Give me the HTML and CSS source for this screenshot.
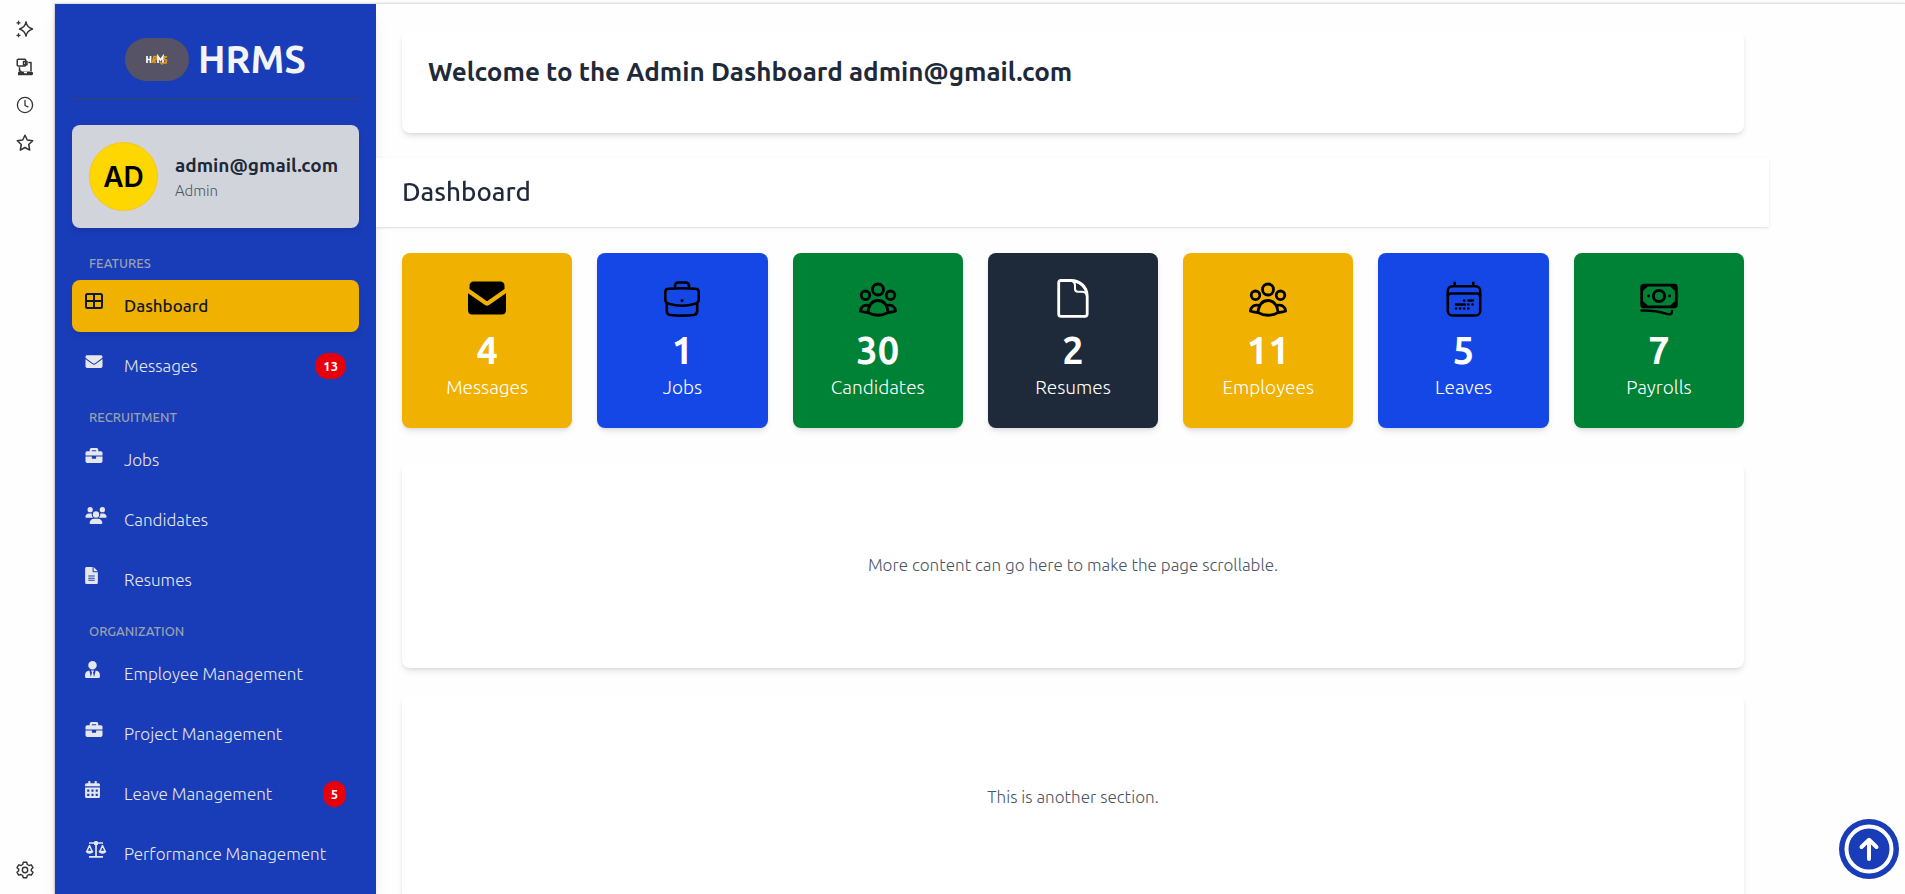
FILE: index.html
```html
<!DOCTYPE html>
<html lang="en">
<head>
<meta charset="utf-8">
<title>HRMS Admin Dashboard</title>
<link rel="stylesheet" href="styles.css">
</head>
<body>
<div class="shell">
  <aside class="rail" aria-label="Quick tools">
    <button class="rail-button" aria-label="Assistant">
      <svg viewBox="0 0 18 18" fill="none" stroke="currentColor" stroke-width="1.4" stroke-linejoin="round"><path d="M10 1.8C10.7 5.800 12.200 7.600 16.500 9 12.200 10.400 10.700 12.200 10 16.200 9.300 12.200 7.800 10.400 3.500 9 7.800 7.600 9.300 5.800 10 1.800Z"/><path d="M2.500.800v4M.500 2.800h4M2.500 13.300v4M.500 15.300h4" stroke-width="1.300"/></svg>
    </button>
    <button class="rail-button" aria-label="Devices">
      <svg viewBox="0 0 18 18" fill="none" stroke="currentColor" stroke-width="1.500" stroke-linejoin="round"><rect x="1.200" y="1.200" width="8.500" height="6.800" rx="1"/><path d="M7.500 3.500H11v3.200H7.500zM12.300 4.500H15V13M3.500 9.200v4.300"/><path d="M3.500 11.500 6 13.500h10v3.700H2V14.500h1.500z" fill="currentColor" stroke="none"/><path d="M2.500 14.500h14v2h-14z" stroke-width="1"/><path d="M8 14.500h3" stroke="#fff"/></svg>
    </button>
    <button class="rail-button" aria-label="History">
      <svg viewBox="0 0 18 18" fill="none" stroke="currentColor" stroke-width="1.300" stroke-linecap="round" stroke-linejoin="round"><circle cx="9" cy="9" r="7.600"/><path d="M9 4.500v5l3 1.300"/></svg>
    </button>
    <button class="rail-button" aria-label="Favourites">
      <svg viewBox="0 0 18 18" fill="none" stroke="currentColor" stroke-width="1.500" stroke-linejoin="round"><path d="M9 1.200 11.300 6l5.400.700-4 3.800 1 5.600L9 13.500l-4.700 2.600 1-5.600-4-3.800L6.700 6z"/></svg>
    </button>
    <button class="rail-button rail-bottom" aria-label="Settings">
      <svg viewBox="0 0 18 18" fill="none" stroke="currentColor" stroke-width="1.400" stroke-linejoin="round"><path d="M7.300 1.200h3.400l.6 2.300 1.700 1 2.300-.700 1.700 2.900L15.300 8.300v1.400l1.700 1.600-1.700 2.900-2.300-.700-1.700 1-.6 2.300H7.300l-.6-2.300-1.700-1-2.300.700L1 11.300l1.700-1.600V8.300L1 6.700l1.700-2.900 2.300.700 1.700-1z"/><circle cx="9" cy="9" r="2.700"/></svg>
    </button>
  </aside>

  <div class="frame">
    <nav class="sidebar" aria-label="Main">
      <header class="brand">
        <svg class="brand-logo" viewBox="0 0 64 43" role="img" aria-label="HRMS logo">
          <rect width="64" height="43" rx="21.500" fill="#565366"/>
          <g fill="none" stroke-width="1.700"><path d="M22 18v7M25.500 18v7M22 21.500h3.500" stroke="#fff"/><path d="M27.500 25l1.500-6.500h2.500l-.5 3h-2.500l2 3.500" stroke="#e09a1c"/><path d="M33 25v-6.500l2.500 3.500L38 18.500V25" stroke="#fff"/><path d="M42 18.800h-2.500l-.5 2.500 2.500 1-.5 2.500h-3M35 24l2.500 2.500" stroke="#e09a1c"/></g>
        </svg>
        <span class="brand-name">HRMS</span>
      </header>

      <section class="profile">
        <span class="avatar">AD</span>
        <div>
          <p class="profile-name">admin@gmail.com</p>
          <p class="profile-role">Admin</p>
        </div>
      </section>

      <h2 class="nav-title">Features</h2>
      <ul class="nav-list">
        <li><a class="nav-item nav-active" href="#dashboard"><span class="nav-icon"><svg viewBox="0 0 18 17" width="18" height="17" fill="none" stroke="currentColor" stroke-width="2"><rect x="1" y="1" width="16" height="14" rx="1.500"/><path d="M9 1v14M1 8h16"/></svg></span>Dashboard</a></li>
        <li><a class="nav-item" href="#messages"><span class="nav-icon"><svg viewBox="0 0 512 512" width="18" height="17" fill="currentColor"><path d="M502.300 190.800c3.900-3.100 9.700-.2 9.700 4.700V400c0 26.500-21.500 48-48 48H48c-26.500 0-48-21.500-48-48V195.600c0-5 5.700-7.800 9.700-4.700 22.400 17.400 52.100 39.500 154.100 113.600 21.100 15.400 56.700 47.800 92.200 47.600 35.700.3 72-32.800 92.300-47.600 102-74.100 131.600-96.300 154-113.700zM256 320c23.200.4 56.600-29.200 73.400-41.400 132.700-96.300 142.800-104.700 173.400-128.700 5.800-4.500 9.200-11.500 9.200-18.900v-19c0-26.500-21.500-48-48-48H48c-26.500 0-48 21.500-48 48v19c0 7.400 3.400 14.300 9.200 18.900 30.600 23.900 40.700 32.400 173.400 128.700 16.800 12.200 50.200 41.800 73.400 41.400z"/></svg></span>Messages<span class="badge">13</span></a></li>
      </ul>

      <h2 class="nav-title">Recruitment</h2>
      <ul class="nav-list">
        <li><a class="nav-item" href="#jobs"><span class="nav-icon"><svg viewBox="0 0 512 512" width="18" height="17" fill="currentColor"><path d="M320 336c0 8.840-7.160 16-16 16h-96c-8.840 0-16-7.160-16-16v-48H0v144c0 25.600 22.400 48 48 48h416c25.600 0 48-22.400 48-48V288H320v48zm144-208h-80V80c0-25.600-22.400-48-48-48H176c-25.600 0-48 22.400-48 48v48H48c-25.600 0-48 22.400-48 48v80h512v-80c0-25.600-22.400-48-48-48zm-144 0H192V96h128v32z"/></svg></span>Jobs</a></li>
        <li><a class="nav-item" href="#candidates"><span class="nav-icon"><svg viewBox="0 0 640 512" width="22" height="17" fill="currentColor"><path d="M144 0a80 80 0 1 1 0 160A80 80 0 1 1 144 0zM512 0a80 80 0 1 1 0 160A80 80 0 1 1 512 0zM0 298.700C0 239.800 47.800 192 106.700 192l42.700 0c15.900 0 31 3.500 44.600 9.700c-1.300 7.200-1.900 14.700-1.900 22.300c0 38.200 16.800 72.500 43.300 96L21.300 320C9.600 320 0 310.400 0 298.700zM405.300 320c26.600-23.500 43.300-57.800 43.300-96c0-7.600-.7-15-1.900-22.300c13.600-6.300 28.700-9.700 44.600-9.700l42.700 0C592.200 192 640 239.800 640 298.700c0 11.800-9.600 21.300-21.300 21.300zM224 224a96 96 0 1 1 192 0 96 96 0 1 1 -192 0zM128 485.300C128 411.700 187.700 352 261.300 352l117.300 0C452.300 352 512 411.700 512 485.300c0 14.700-11.900 26.700-26.700 26.700l-330.700 0c-14.700 0-26.700-11.900-26.700-26.700z"/></svg></span>Candidates</a></li>
        <li><a class="nav-item" href="#resumes"><span class="nav-icon"><svg viewBox="0 0 384 512" width="13" height="17" fill="currentColor"><path fill-rule="evenodd" d="M224 136V0H48C20 0 0 20 0 48v416c0 28 20 48 48 48h288c28 0 48-20 48-48V160H248c-13.200 0-24-10.800-24-24zM96 384h192v32H96zM96 320h192v32H96zM96 256h192v32H96zM384 128H256V0z"/></svg></span>Resumes</a></li>
      </ul>

      <h2 class="nav-title">Organization</h2>
      <ul class="nav-list">
        <li><a class="nav-item" href="#employees"><span class="nav-icon"><svg viewBox="0 0 448 512" width="15" height="17" fill="currentColor"><path d="M224 256c70.700 0 128-57.300 128-128S294.700 0 224 0 96 57.300 96 128s57.300 128 128 128zm95.800 32.600L272 480l-32-136 32-56h-96l32 56-32 136-47.800-191.400C56.900 292 0 350.300 0 422.400V464c0 26.500 21.500 48 48 48h352c26.500 0 48-21.500 48-48v-41.600c0-72.100-56.900-130.400-128.200-133.800z"/></svg></span>Employee Management</a></li>
        <li><a class="nav-item" href="#projects"><span class="nav-icon"><svg viewBox="0 0 512 512" width="18" height="17" fill="currentColor"><path d="M320 336c0 8.840-7.160 16-16 16h-96c-8.840 0-16-7.160-16-16v-48H0v144c0 25.600 22.400 48 48 48h416c25.600 0 48-22.400 48-48V288H320v48zm144-208h-80V80c0-25.600-22.400-48-48-48H176c-25.600 0-48 22.400-48 48v48H48c-25.600 0-48 22.400-48 48v80h512v-80c0-25.600-22.400-48-48-48zm-144 0H192V96h128v32z"/></svg></span>Project Management</a></li>
        <li><a class="nav-item" href="#leaves"><span class="nav-icon"><svg viewBox="0 0 448 512" width="15" height="17" fill="currentColor" fill-rule="evenodd"><path d="M400 64h-48V16c0-8.800-7.200-16-16-16h-32c-8.800 0-16 7.200-16 16v48H160V16c0-8.800-7.200-16-16-16h-32c-8.800 0-16 7.200-16 16v48H48C21.500 64 0 85.500 0 112v48h448v-48c0-26.500-21.500-48-48-48zM0 464c0 26.500 21.500 48 48 48h352c26.500 0 48-21.500 48-48V192H0zM64 256h64v64H64zM192 256h64v64h-64zM320 256h64v64h-64zM64 384h64v64H64zM192 384h64v64h-64zM320 384h64v64h-64z"/></svg></span>Leave Management<span class="badge">5</span></a></li>
        <li><a class="nav-item" href="#performance"><span class="nav-icon"><svg viewBox="0 0 22 17" width="22" height="17" fill="none" stroke="currentColor" stroke-width="1.700" stroke-linejoin="round"><path d="M11 0v16M4 2h14M4 15.900h14"/><circle cx="11" cy="2.200" r="1.400" fill="currentColor"/><path d="M4.500 4.500 1.800 10.500h5.500zM17.500 4.500l-2.700 6h5.500z" stroke-width="1.500"/><path d="M.700 10h7.700c-.3 3.600-7.400 3.600-7.700 0zM13.600 10h7.700c-.3 3.600-7.400 3.600-7.700 0z" fill="currentColor" stroke="none"/></svg></span>Performance Management</a></li>
      </ul>
    </nav>

    <main class="main">
      <section class="welcome panel"><h1>Welcome to the Admin Dashboard admin@gmail.com</h1></section>
      <header class="page-header"><h2>Dashboard</h2></header>

      <section class="stats" aria-label="Totals">
        <article class="stat yellow">
          <svg viewBox="0 0 40 40" fill="currentColor"><path d="M7 3.500h26q4.500 0 4.500 4.500v3L20 23.300 2.500 11V8Q2.500 3.500 7 3.500z"/><path d="M1 15.200 18 27q2 1.300 4 0l17-11.800V32q0 4.500-4.500 4.500h-29Q1 36.500 1 32z"/></svg>
          <strong>4</strong><span>Messages</span>
        </article>
        <article class="stat blue">
          <svg viewBox="0 0 40 40" fill="none" stroke="currentColor" stroke-width="2.600" stroke-linejoin="round" stroke-linecap="round"><path d="M13 10V8q0-3.500 3.500-3.500h7Q27 4.500 27 8v2"/><path d="M6.500 10.800q13.500-1.200 27 0 3.200 0 3.200 3.500v7.200q0 3.300-3.500 4.300-13.200 4-26.400 0-3.500-1-3.500-4.300v-7.200q0-3.500 3.200-3.500z"/><path d="M4.800 25v8q0 3.500 3.500 4 11.700 1.200 23.400 0 3.500-.5 3.500-4v-8"/><path d="M20 22.500h.1" stroke-width="3"/></svg>
          <strong>1</strong><span>Jobs</span>
        </article>
        <article class="stat green">
          <svg viewBox="0 0 40 40" fill="none" stroke="currentColor" stroke-width="2.800"><circle cx="20" cy="11.500" r="5.500"/><circle cx="7.500" cy="17.300" r="4.300"/><circle cx="32.500" cy="17.300" r="4.300"/><path d="M9.800 34.500C11 26 15 22.500 20 22.500S29 26 30.200 34.500Q20 40 9.800 34.500z"/><path d="M11.500 27.400C6 26 2.800 29 2.500 33.100q3.500 1.600 7.300 1.200M28.500 27.400c5.500-1.400 8.700 1.600 9 5.700q-3.500 1.600-7.300 1.200"/></svg>
          <strong>30</strong><span>Candidates</span>
        </article>
        <article class="stat dark">
          <svg viewBox="0 0 40 40" fill="none" stroke="currentColor" stroke-width="2.800" stroke-linejoin="round"><path d="M8 2.500h10C27 2.500 34.200 9 34.200 18v18q0 2.300-2.300 2.300H8q-2.300 0-2.300-2.300V4.800Q5.700 2.500 8 2.500z"/><path d="M17 2.500q5 .5 5 5v3.300q0 3 3 3h3.700q4.500 0 5.300 4.200M22 3.500q9 2.500 11.500 11" stroke-width="2.100"/></svg>
          <strong>2</strong><span>Resumes</span>
        </article>
        <article class="stat yellow">
          <svg viewBox="0 0 40 40" fill="none" stroke="currentColor" stroke-width="2.800"><circle cx="20" cy="11.500" r="5.500"/><circle cx="7.500" cy="17.300" r="4.300"/><circle cx="32.500" cy="17.300" r="4.300"/><path d="M9.800 34.500C11 26 15 22.500 20 22.500S29 26 30.200 34.500Q20 40 9.800 34.500z"/><path d="M11.500 27.400C6 26 2.800 29 2.500 33.100q3.500 1.600 7.300 1.200M28.500 27.400c5.500-1.400 8.700 1.600 9 5.700q-3.500 1.600-7.300 1.200"/></svg>
          <strong>11</strong><span>Employees</span>
        </article>
        <article class="stat blue">
          <svg viewBox="0 0 40 40" fill="none" stroke="currentColor" stroke-width="2.600"><rect x="3.800" y="8.300" width="32.400" height="29.200" rx="4.500"/><path d="M10.700 3.700v5M29.300 3.700v5M3.800 18.500q0-3 3-3h26.400q3 0 3 3"/><path d="M20.200 22.500h.1M24.500 22.500H29M12 26.500h9M24.300 26.500h.1M28.500 26.500h.1M12 30.500h.1M16.100 30.500h.1M20.200 30.500h.1M24.300 30.500h.1" stroke-width="2.600" stroke-linecap="round"/></svg>
          <strong>5</strong><span>Leaves</span>
        </article>
        <article class="stat green">
          <svg viewBox="0 0 40 40" fill="none" stroke="currentColor" stroke-width="2.800" stroke-linecap="round"><rect x="2.700" y="7.200" width="34.600" height="21.600" rx="2"/><circle cx="20" cy="18" r="5.600" stroke-width="3"/><path d="M3.500 11 7 8M33 8l3.500 3M3.500 25 7 28M33 28l3.500-3" stroke-width="3.400"/><path d="M9.500 18h.1M30.500 18h.1" stroke-width="2.800"/><path d="M2.500 32.500Q16 32.200 27 35.700q6 2.200 6-2.800" stroke-width="2.400"/></svg>
          <strong>7</strong><span>Payrolls</span>
        </article>
      </section>

      <section class="filler panel"><p>More content can go here to make the page scrollable.</p></section>
      <section class="filler panel"><p>This is another section.</p></section>
    </main>
  </div>
</div>

<button class="to-top" aria-label="Back to top">
  <svg viewBox="0 0 60 60" width="60" height="60" fill="none" stroke="#fff" stroke-width="4" stroke-linecap="round" stroke-linejoin="round"><circle cx="30" cy="30" r="22.500"/><path d="M30 40V21M22.500 28 30 20.800 37.500 28"/></svg>
</button>
</body>
</html>
```
FILE: styles.css
```css
* { box-sizing: border-box; }

body, h1, h2, p, ul { margin: 0; padding: 0; }

body {
  background: #fefefe;
  color: #1e2939;
  font-family: Ubuntu, "Open Sans", "Noto Sans", sans-serif;
  font-size: 17px;
  font-weight: 300;
  line-height: 26px;
}

button { border: 0; padding: 0; background: none; cursor: pointer; }
svg { display: block; flex: none; }

.shell { display: flex; height: 100vh; overflow: hidden; }

/* Tool rail */
.rail {
  flex: none;
  width: 54px;
  padding: 20px 17px 15px 16px;
  display: flex;
  flex-direction: column;
  gap: 20px;
}
.rail-button { width: 18px; height: 18px; color: #333; }
.rail-button svg { width: 18px; height: 18px; }
.rail-bottom { margin-top: auto; }

.frame {
  flex: 1;
  min-width: 0;
  margin-top: 3px;
  border-top: 1px solid #e0e0e2;
  border-left: 1px solid #d5d7de;
  box-shadow: 0 0 3px rgba(0, 0, 0, .12);
  display: flex;
}

/* Sidebar */
.sidebar {
  position: relative;
  z-index: 1;
  flex: none;
  width: 321px;
  padding: 25px 17px;
  overflow-y: auto;
  scrollbar-width: none;
  background: #193cb8;
  color: #e5e7eb;
  box-shadow: 0 10px 15px -3px rgba(0, 0, 0, .1), 0 4px 6px -4px rgba(0, 0, 0, .1);
}
.brand {
  display: flex;
  align-items: center;
  justify-content: center;
  gap: 9px;
  padding-bottom: 9px;
  border-bottom: 1px solid #3c4354;
}
.brand-logo { width: 64px; height: 43px; }
.brand-name { font-size: 38px; line-height: 60px; font-weight: 600; color: #f3f4f6; }

.profile {
  display: flex;
  align-items: center;
  gap: 17px;
  margin: 26px 0;
  padding: 17px;
  border-radius: 8px;
  background: #d1d5db;
  box-shadow: 0 4px 6px -1px rgba(0, 0, 0, .1);
}
.avatar {
  flex: none;
  width: 69px;
  height: 69px;
  display: grid;
  place-items: center;
  border: 1px solid #fcc419;
  border-radius: 50%;
  background: #ffd700;
  color: #000;
  font-family: Inter, sans-serif;
  font-size: 28px;
  font-weight: 600;
}
.profile-name { margin-bottom: 2px; color: #1e2939; font-size: 19px; font-weight: 600; }
.profile-role { color: #4a5565; font-size: 15px; line-height: 22px; }

.nav-title {
  margin: 16px 0 8px;
  padding-left: 17px;
  color: #99a1af;
  font-size: 13px;
  line-height: 18px;
  font-weight: 500;
  text-transform: uppercase;
}
.nav-list { list-style: none; display: grid; gap: 8px; }
.nav-item {
  display: flex;
  align-items: flex-start;
  padding: 13px;
  border-radius: 8px;
  color: inherit;
  text-decoration: none;
}
.nav-icon { flex: none; width: 39px; }
.nav-active {
  background: #f0b100;
  color: #101828;
  font-weight: 500;
  box-shadow: 0 4px 6px -1px rgba(0, 0, 0, .1);
}
.badge {
  margin-left: auto;
  padding: 0 8px;
  border-radius: 13px;
  background: #e7000b;
  color: #fff;
  font-size: 13px;
  font-weight: 600;
}

/* Main column */
.main {
  flex: 1;
  min-width: 0;
  padding-right: 136px;
  overflow-y: auto;
  scrollbar-width: none;
}
.panel {
  margin: 26px 25px 26px 26px;
  border-radius: 8px;
  background: #fff;
  box-shadow: 0 4px 6px -1px rgba(0, 0, 0, .1), 0 2px 4px -2px rgba(0, 0, 0, .1);
}
.welcome { padding: 25px 26px 44px; margin-bottom: 25px; }
.welcome h1 { font-size: 26px; line-height: 34px; font-weight: 600; }
.page-header {
  position: relative;
  z-index: 2;
  padding: 16px 26px 18px;
  background: #fff;
  box-shadow: 0 1px 3px rgba(0, 0, 0, .1), 0 1px 2px -1px rgba(0, 0, 0, .1);
}
.page-header h2 { font-size: 26px; line-height: 35px; font-weight: 500; }

.stats {
  display: grid;
  grid-template-columns: repeat(7, 1fr);
  gap: 25px;
  margin: 26px 25px 34px 26px;
}
.stat {
  display: flex;
  flex-direction: column;
  align-items: center;
  padding: 25px 8px 26px;
  border-radius: 8px;
  color: #fff;
  box-shadow: 0 4px 6px -1px rgba(0, 0, 0, .1), 0 2px 4px -2px rgba(0, 0, 0, .1);
}
.stat svg { width: 40px; height: 40px; margin-bottom: 11px; color: #000; }
.stat strong { font-size: 38px; line-height: 43px; font-weight: 700; }
.stat span { font-size: 19px; line-height: 30px; }
.stat.dark svg { color: #fff; }
.yellow { background: #f0b100; }
.blue { background: #1447e6; }
.green { background: #008236; }
.dark { background: #1e2939; }

.filler {
  min-height: 206px;
  display: grid;
  place-items: center;
  color: #4a5565;
}

.to-top {
  position: fixed;
  right: 6px;
  bottom: 15px;
  border-radius: 50%;
  background: #193cb8;
}
```
